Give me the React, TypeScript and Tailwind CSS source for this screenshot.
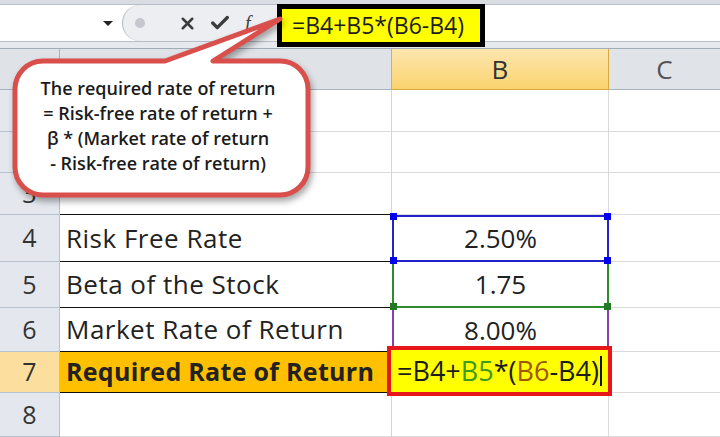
import { X, Check } from "lucide-react";

const rowHeights = [42, 41, 42, 47, 46, 44, 41, 44];

const colA: Record<number, string> = {
  4: "Risk Free Rate",
  5: "Beta of the Stock",
  6: "Market Rate of Return",
  7: "Required Rate of Return",
};

const colB: Record<number, string> = {
  4: "2.50%",
  5: "1.75",
  6: "8.00%",
};

function Handle({ pos, color }: { pos: string; color: string }) {
  return <span className={`absolute w-[7px] h-[7px] z-10 ${pos} ${color}`} />;
}

function FormulaBar() {
  return (
    <div className="h-[49px] flex flex-col bg-[#dfe3e8]">
      <div className="h-[4px] bg-[#d9dde3]" />
      <div className="h-[38px] flex border-y border-[#b7bec8] bg-white">
        <div className="w-[122px] flex items-center justify-end pr-[9px]">
          <span className="w-0 h-0 border-x-[5px] border-x-transparent border-t-[5px] border-t-[#222]" />
        </div>
        <div className="w-[156px] flex items-center bg-[#eceef1] rounded-l-[22px] border-l border-[#b0b7c1]">
          <span className="ml-[12px] w-[10px] h-[10px] rounded-full bg-[#c4c8ce]" />
          <X className="ml-[33px] text-[#3c3c3c]" size={19} strokeWidth={3.2} />
          <Check className="ml-[12px] text-[#3c3c3c]" size={22} strokeWidth={3.6} />
          <span className="ml-[14px] text-[20px] italic font-['Liberation_Serif',serif] text-[#444]">
            f<sub className="text-[11px]">x</sub>
          </span>
        </div>
        <div className="flex-1" />
      </div>
      <div className="flex-1 bg-[#e6e9ed] border-b border-[#a3acb9]" />
    </div>
  );
}

function Sheet() {
  return (
    <div className="grid grid-cols-[60px_332px_217px_111px]">
      {/* header row */}
      <div className="h-[41px] bg-[#dfe3e8] border-r border-b border-[#a9b3c0]" />
      <div className="h-[41px] bg-[#dfe3e8] border-r border-b border-[#a9b3c0]" />
      <div className="h-[41px] bg-gradient-to-b from-[#fde6ad] to-[#fbd36e] border-r border-b border-[#d6a93f] flex items-center justify-center text-[26px] text-[#333]">
        B
      </div>
      <div className="h-[41px] bg-[#e0e4e9] border-b border-[#a9b3c0] flex items-center justify-center text-[26px] text-[#555]">
        C
      </div>

      {rowHeights.map((h, i) => {
        const r = i + 1;
        const boldRow = r === 7;
        const blackLine = r >= 3 && r <= 7;
        return [
          <div
            key={`h${r}`}
            style={{ height: h }}
            className={`flex items-center justify-center text-[25px] text-[#333] border-r border-b border-[#b7c1cd] ${
              boldRow ? "bg-[#fcdf9e]" : "bg-[#e4e8ee]"
            }`}
          >
            {r}
          </div>,
          <div
            key={`a${r}`}
            style={{ height: h }}
            className={`flex items-center pl-[6px] text-[#222] border-b ${
              blackLine ? "border-[#111]" : "border-[#dadada]"
            } ${boldRow ? "bg-[#ffc000] font-bold text-[25px] tracking-[0.3px]" : "text-[26px] tracking-[0.5px]"} ${
              r <= 3 || r === 8 ? "border-r border-r-[#d4d4d4]" : ""
            }`}
          >
            {colA[r]}
          </div>,
          <div
            key={`b${r}`}
            style={{ height: h }}
            className={`relative flex items-center justify-center text-[26px] text-[#222] ${
              r === 4
                ? "border-2 border-[#2222cc]"
                : r === 5
                ? "border-x-2 border-b-2 border-[#2e8b2e]"
                : r === 6
                ? "border-x-2 border-[#8a3fb0]"
                : r === 7
                ? ""
                : "border-b border-r border-[#dadada]"
            }`}
          >
            {r === 4 && (
              <>
                <Handle pos="-top-[4px] -left-[4px]" color="bg-[#0000ee]" />
                <Handle pos="-top-[4px] -right-[4px]" color="bg-[#0000ee]" />
                <Handle pos="-bottom-[4px] -left-[4px]" color="bg-[#0000ee]" />
                <Handle pos="-bottom-[4px] -right-[4px]" color="bg-[#0000ee]" />
              </>
            )}
            {r === 5 && (
              <>
                <Handle pos="-bottom-[4px] -left-[4px]" color="bg-[#217a21]" />
                <Handle pos="-bottom-[4px] -right-[4px]" color="bg-[#217a21]" />
              </>
            )}
            {colB[r]}
            {r === 7 && (
              <div className="absolute -top-[6px] -left-[5px] -right-[3px] -bottom-[3px] z-20 border-[4px] border-[#e5171b] bg-[#ffff00] flex items-center justify-center text-[27px] text-[#1c1c1c]">
                <span>
                  =B4+<span className="text-[#3d9a1c]">B5</span>*(
                  <span className="text-[#a0560f]">B6</span>-B4)
                </span>
                <span className="ml-[1px] w-[2px] h-[30px] bg-[#111]" />
              </div>
            )}
          </div>,
          <div
            key={`c${r}`}
            style={{ height: h }}
            className="border-b border-[#dadada]"
          />,
        ];
      })}
    </div>
  );
}

function Callout() {
  return (
    <div className="absolute left-0 top-0 w-[330px] h-[210px] pointer-events-none z-40">
      <svg width="330" height="210" className="absolute inset-0 drop-shadow-[2px_4px_3px_rgba(0,0,0,0.35)]">
        <path
          d="M 43 61 L 165 61 L 280 19 L 213 61 L 280 61 A 28 28 0 0 1 308 89 L 308 167 A 28 28 0 0 1 280 195 L 43 195 A 28 28 0 0 1 15 167 L 15 89 A 28 28 0 0 1 43 61 Z"
          fill="#ffffff"
          stroke="#d94f4c"
          strokeWidth="5"
          strokeLinejoin="round"
        />
      </svg>
      <div className="absolute left-[13px] top-[61px] w-[290px] h-[134px] pb-[5px] flex flex-col items-center justify-center text-[18px] leading-[25px] font-semibold text-[#1b1b1b]">
        <span>The required rate of return</span>
        <span>= Risk-free rate of return +</span>
        <span>β * (Market rate of return</span>
        <span>- Risk-free rate of return)</span>
      </div>
    </div>
  );
}

export default function App() {
  return (
    <div className="relative w-[720px] h-[437px] overflow-hidden bg-white font-['Open_Sans',sans-serif]">
      <FormulaBar />
      <Sheet />
      <div className="absolute left-[277px] top-[4px] w-[208px] h-[43px] border-[5px] border-black bg-[#ffff00] flex items-center pl-[10px] text-[23px] text-[#1c1c1c] z-30">
        =B4+B5*(B6-B4)
      </div>
      <Callout />
    </div>
  );
}
